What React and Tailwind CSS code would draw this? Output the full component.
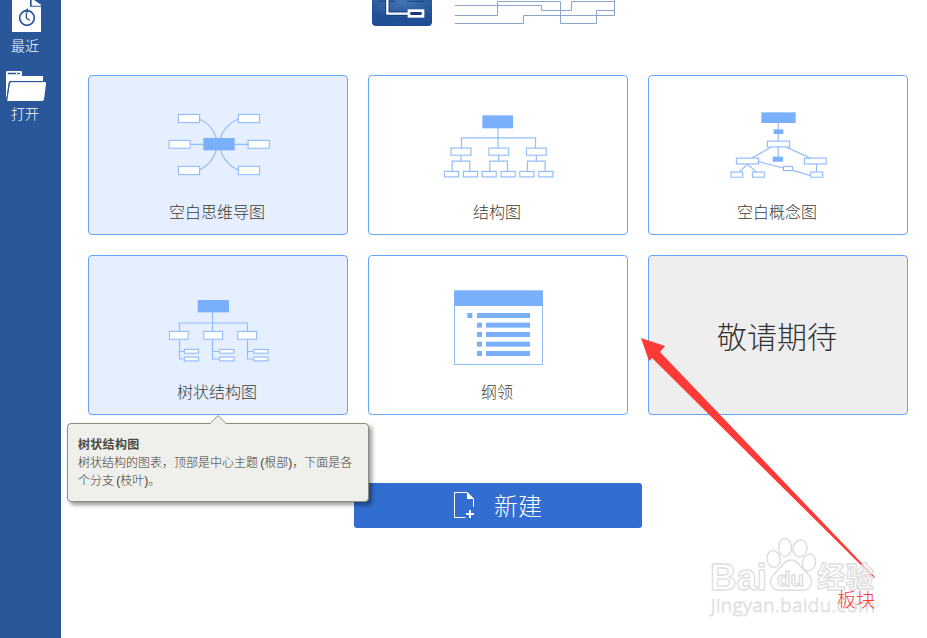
import React from "react";

const BLUE = "#7ab0fb";
const PALE = "#92bdfb";

// Outlined node used in all template diagrams (3 units per screen pixel).
function Node({ x, y, w, h, c = PALE }) {
  return (
    <g>
      <rect x={x + 1.5} y={y + 1.5} width={w - 3} height={h - 3} fill="#fff" stroke={c} strokeOpacity="0.3" strokeWidth="6" />
      <rect x={x + 1.5} y={y + 1.5} width={w - 3} height={h - 3} fill="#fff" stroke={c} strokeWidth="3" />
    </g>
  );
}

function Line({ d, c = PALE }) {
  return <path d={d} fill="none" stroke={c} strokeWidth="3.6" />;
}

function Art({ children }) {
  return (
    <svg className="block h-[118px] w-[258px]" viewBox="27 18 774 354">
      {children}
    </svg>
  );
}

function MindMap() {
  return (
    <Art>
      <Line d="M358 147Q397 164 409 205M475 147Q434 164 421 205M358 300Q397 282 409 240M475 300Q434 282 421 240M330 223H504" />
      <Node x={294} y={132} w={66} h={27} />
      <Node x={474} y={132} w={66} h={27} />
      <Node x={266} y={210} w={66} h={26} />
      <Node x={503} y={210} w={66} h={26} />
      <Node x={294} y={288} w={66} h={27} />
      <Node x={474} y={288} w={66} h={27} />
      <rect x="370" y="204" width="94" height="37" fill={BLUE} />
    </Art>
  );
}

function OrgChart() {
  return (
    <Art>
      <Line d="M414 174V234M304.5 235V203.5H526.5V235" />
      {[272, 385, 498].map((x) => (
        <g key={x}>
          <Line d={`M${x + 31} 256V274M${x + 4.5} 305V273.5H${x + 57.5}V305`} />
          <Node x={x} y={233} w={62} h={24} />
          <Node x={x - 20} y={303} w={45} h={19} />
          <Node x={x + 37} y={303} w={45} h={19} />
        </g>
      ))}
      <rect x="367" y="136" width="92" height="39" fill={BLUE} />
    </Art>
  );
}

function ConceptMap() {
  return (
    <Art>
      <Line d="M414.5 158V262M393 232L336 264M441 232L510 264M323 282L296 308M323 282L350 308M356 275L430 294M458 301L512 317M529.5 282V307" />
      <Node x={381} y={212} w={69} h={20} />
      <Node x={288} y={263} w={69} h={20} />
      <Node x={492} y={263} w={68} h={20} />
      <Node x={429} y={288} w={30} h={15} />
      <Node x={272} y={305} w={37} h={18} />
      <Node x={336} y={305} w={38} h={18} />
      <Node x={511} y={305} w={38} h={18} />
      <rect x="364" y="127" width="103" height="32" fill={BLUE} />
      <rect x="401" y="178" width="29" height="14" fill={BLUE} />
      <rect x="398" y="260" width="31" height="15" fill={BLUE} />
    </Art>
  );
}

function TreeChart() {
  const branches = [
    [267, 298.5, 312],
    [370, 397.5, 418],
    [472, 502.5, 520],
  ];
  return (
    <Art>
      <Line d="M397.5 186V244M298.5 244V219H502.5V244" />
      {branches.map(([x, trunk, leaf]) => (
        <g key={x}>
          <Line d={`M${trunk} 268V327H${leaf}M${trunk} 304.5H${leaf}`} />
          <Node x={x} y={243} w={59} h={26} />
          <Node x={leaf} y={297} w={45} h={14} />
          <Node x={leaf} y={320} w={45} h={14} />
        </g>
      ))}
      <rect x="353" y="150" width="94" height="37" fill={BLUE} />
    </Art>
  );
}

function Outline() {
  return (
    <Art>
      <rect x="283.5" y="122.500" width="264" height="221" fill="#fff" stroke={PALE} strokeWidth="3" />
      <rect x="283" y="122" width="265" height="46" fill={BLUE} />
      <rect x="322" y="189" width="15" height="15" fill={BLUE} />
      <rect x="351" y="189" width="159" height="15" fill={BLUE} />
      {[218, 246, 275, 303].map((y) => (
        <g key={y} fill={BLUE}>
          <rect x="351" y={y} width="15" height="15" />
          <rect x="378" y={y} width="132" height="15" />
        </g>
      ))}
    </Art>
  );
}

function Card({ label, active, children }) {
  return (
    <div className={`h-40 rounded border border-[#66a3fa] ${active ? "bg-[#e5efff]" : "bg-white"}`}>
      {children}
      <div className="mt-[7px] pr-0.5 text-center text-base leading-6 text-[#3c3c36]">{label}</div>
    </div>
  );
}

function Sidebar() {
  return (
    <aside className="flex w-[61px] shrink-0 flex-col bg-[#2a579a] text-sm leading-5 text-white">
      <svg className="ml-3 block h-8 w-[29px]" viewBox="36 0 87 96">
        <path d="M36 0H90V20H123V96H36Z" fill="#fff" />
        <path d="M95 0H102L123 14V17H95Z" fill="#fff" />
        <circle cx="81" cy="54" r="22" fill="none" stroke="#2a579a" strokeWidth="5" />
        <path d="M79 39V54L89 61" fill="none" stroke="#2a579a" strokeWidth="4" />
        <path d="M72 32L84 25V40Z" fill="#2a579a" />
      </svg>
      <div className="ml-[11px] mt-1">最近</div>
      <svg className="ml-1.5 mt-[15px] block h-[30px] w-10" viewBox="18 213 120 90">
        <path d="M18 303V217Q18 213 22 213H62Q66 213 66 217V228H129V243H31Q27 243 26 248L18 303Z" fill="#fff" />
        <path d="M25 220.500H58" stroke="#2a579a" strokeWidth="5" strokeLinecap="round" />
        <path d="M48 220.500H52" stroke="#fff" strokeWidth="3" />
        <path d="M21 303L29 251Q30 246 35 246H134Q138 246 138 250L132 298Q131 303 127 303Z" fill="#fff" />
        <path d="M20 303L28 250Q29 245 34 245H129" fill="none" stroke="#2a579a" strokeWidth="3" />
      </svg>
      <div className="ml-[11px] mt-[3px]">打开</div>
    </aside>
  );
}

function Header() {
  return (
    <header className="flex h-[75px] items-start pl-[311px]">
      <svg className="block h-[26px] w-[60px]" viewBox="66 0 180 78">
        <defs>
          <radialGradient id="logo" cx="0.5" cy="0.05" r="0.65">
            <stop offset="0" stopColor="#4675b4" />
            <stop offset="1" stopColor="#214f95" />
          </radialGradient>
        </defs>
        <path d="M66 0H246V66Q246 78 234 78H78Q66 78 66 66Z" fill="url(#logo)" />
        <path d="M87 4H135M172 4H222" stroke="#174489" strokeWidth="3" />
        <path d="M112 0V41H174" fill="none" stroke="#123c82" strokeWidth="13" />
        <path d="M112 0V41H174" fill="none" stroke="#fff" strokeWidth="7" />
        <rect x="177" y="32" width="42" height="17" fill="#123c82" stroke="#fff" strokeWidth="8" />
      </svg>
      <svg className="ml-[23px] block h-6 w-[161px]" viewBox="315 0 483 72">
        <path
          d="M315 16.5H574.5V31.5H664.5V4.5H795M315 46.5H442.5V4.5H631.5V70.5H739.5V31.5H795M315 70.5H520.5V46.5H793.5V0"
          fill="none"
          stroke="#8ca5cc"
          strokeWidth="3"
        />
      </svg>
    </header>
  );
}

function Tooltip() {
  return (
    <div className="absolute left-[67px] top-[423px] h-[79px] w-[302px] rounded border border-[#8b8b82] bg-[#eff0eb] pl-2.5 pt-3 text-xs leading-[18px] text-[#3c3c36] shadow-[3px_3px_4px_rgba(0,0,0,0.4)]">
      <svg className="absolute -top-[9px] left-[141px] h-[9px] w-[18px]" viewBox="0 0 18 9">
        <path d="M0.5 9L9 0.5L17.5 9" fill="#eff0eb" stroke="#8b8b82" />
      </svg>
      <div className="font-bold tracking-[0.3px] text-[#4b4b45]">树状结构图</div>
      <div className="whitespace-nowrap [word-spacing:-1px]">树状结构的图表，顶部是中心主题 (根部)，下面是各</div>
      <div className="[word-spacing:-1px]">个分支 (枝叶)。</div>
    </div>
  );
}

function Watermark() {
  return (
    <svg className="absolute left-[690px] top-[520px] h-[118px] w-[230px]" viewBox="0 0 230 118">
      <g fill="#fff" fillOpacity="0.6" stroke="#dedede" strokeWidth="1.5">
        <ellipse cx="83.5" cy="39" rx="6.5" ry="8.5" transform="rotate(-8 83.5 39)" />
        <ellipse cx="95" cy="27.500" rx="6.5" ry="9" />
        <ellipse cx="110" cy="28.500" rx="7" ry="8.5" transform="rotate(12 110 28.500)" />
        <ellipse cx="119" cy="42.500" rx="6.500" ry="8.500" transform="rotate(15 119 42.500)" />
        <path d="M101 40C94 40 92 47 86 52C80 57 79 63 83 68C87 72 94 70 101 70C108 70 115 72 119 68C123 63 122 57 116 52C110 47 108 40 101 40Z" />
      </g>
      <g fill="#fff" fillOpacity="0.6" stroke="#dedede" strokeWidth="1.3" fontFamily="'Liberation Sans', 'Noto Sans CJK SC', sans-serif">
        <text x="20" y="70" fontSize="37" fontWeight="700" textLength="57" lengthAdjust="spacingAndGlyphs">Bai</text>
        <text x="87" y="66" fontSize="21" fontWeight="700" textLength="27" lengthAdjust="spacingAndGlyphs">du</text>
        <text x="127" y="68" fontSize="29" fontWeight="700" textLength="57" lengthAdjust="spacingAndGlyphs">经验</text>
        <text x="21" y="92" fontSize="19" textLength="164" strokeWidth="0.8" fontFamily="'Open Sans', 'Noto Sans', sans-serif">jingyan.baidu.com</text>
      </g>
    </svg>
  );
}

export default function App() {
  return (
    <div className="relative flex h-[638px] w-[927px] overflow-hidden bg-white font-['Liberation_Sans','Noto_Sans_CJK_SC',sans-serif] font-light">
      <Sidebar />
      <main className="flex flex-1 flex-col">
        <Header />
        <section className="ml-[27px] grid w-[820px] grid-cols-3 gap-5">
          <Card label="空白思维导图" active><MindMap /></Card>
          <Card label="结构图"><OrgChart /></Card>
          <Card label="空白概念图"><ConceptMap /></Card>
          <Card label="树状结构图" active><TreeChart /></Card>
          <Card label="纲领"><Outline /></Card>
          <div className="flex h-40 items-center justify-center rounded border border-[#66a3fa] bg-[#eeeeee] pr-0.5 pt-1.5 text-[30px] leading-9 text-[#333]">
            敬请期待
          </div>
        </section>
        <button className="ml-[293px] mt-[68px] flex h-[45px] w-72 items-center rounded-[3px] bg-[#316ecf] pl-[100px] text-2xl text-white">
          <svg className="block h-[27px] w-[21px]" viewBox="0 0 21 27">
            <path d="M11.500 25.500H0.500V0.500H13.500L19.500 7V15" fill="none" stroke="#fff" />
            <path d="M13 0L20 7H13Z" fill="#fff" />
            <path d="M16 18V26M12 22H20" stroke="#fff" strokeWidth="2" />
          </svg>
          <span className="ml-[19px] pt-0.5">新建</span>
        </button>
      </main>
      <Tooltip />
      <svg className="absolute left-[635px] top-[330px] h-[260px] w-[250px]" viewBox="635 330 250 260">
        <path d="M641 338L665 346L660 352L875 577L874 578L652 358L649 361Z" fill="#fc3b38" />
      </svg>
      <Watermark />
      <div className="absolute left-[837px] top-[589px] text-[19px] leading-6 text-[#fc3b38]">板块</div>
    </div>
  );
}
